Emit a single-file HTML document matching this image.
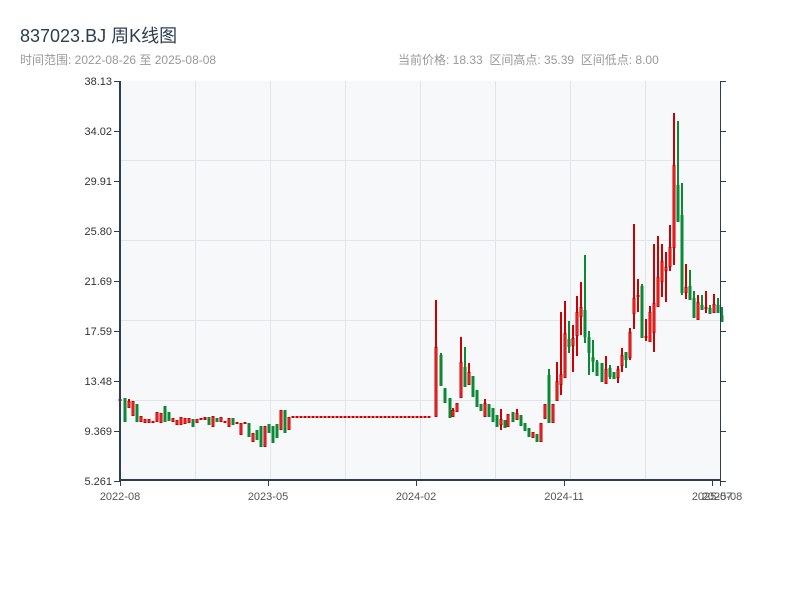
<!DOCTYPE html>
<html><head><meta charset="utf-8"><style>
body{margin:0;background:#fff;width:800px;height:600px;overflow:hidden;font-family:"Liberation Sans","Noto Sans CJK SC",sans-serif}
.t{position:absolute;left:20px;top:22px;font-size:18px;color:#2c3e50}
.s{position:absolute;left:20px;top:51px;font-size:12px;color:#999}
.r{position:absolute;left:398px;top:51px;font-size:12px;color:#999;word-spacing:0}
svg{position:absolute;left:0;top:0}
</style></head><body>
<div class="t">837023.BJ 周K线图</div>
<div class="s">时间范围: 2022-08-26 至 2025-08-08</div>
<div class="r">当前价格: 18.33&nbsp;&nbsp;区间高点: 35.39&nbsp;&nbsp;区间低点: 8.00</div>
<svg id="c" width="800" height="600" xmlns="http://www.w3.org/2000/svg" shape-rendering="crispEdges">
<rect x="120" y="81" width="600" height="399" fill="#f6f8fa"/>
<g stroke="#e1e4e8" stroke-width="1">
<line x1="195.5" y1="81" x2="195.5" y2="480"/><line x1="270.5" y1="81" x2="270.5" y2="480"/><line x1="345.5" y1="81" x2="345.5" y2="480"/><line x1="420.5" y1="81" x2="420.5" y2="480"/><line x1="495.5" y1="81" x2="495.5" y2="480"/><line x1="570.5" y1="81" x2="570.5" y2="480"/><line x1="645.5" y1="81" x2="645.5" y2="480"/>
<line x1="120" y1="160.5" x2="720" y2="160.5"/><line x1="120" y1="240.5" x2="720" y2="240.5"/><line x1="120" y1="320.5" x2="720" y2="320.5"/><line x1="120" y1="400.5" x2="720" y2="400.5"/>
</g>
<g id="k"></g>
<g stroke="#2c3e50">
<line x1="120" y1="81" x2="120" y2="481" stroke-width="2"/>
<line x1="119" y1="480" x2="721" y2="480" stroke-width="2"/>
<line x1="720.5" y1="81" x2="720.5" y2="481" stroke-width="1"/>
</g>
<g id="ax" stroke="#2c3e50" stroke-width="1"></g>
<g font-size="11" fill="#333" text-anchor="end" id="yl"></g>
<g font-size="11" fill="#555" text-anchor="middle">
<text x="120" y="500">2022-08</text><text x="268" y="500">2023-05</text><text x="416" y="500">2024-02</text><text x="564" y="500">2024-11</text><text x="712" y="500">2025-07</text><text x="722" y="500">2025-08</text>
</g>
</svg>
<script>
var D=[[119,399,401,399,401,'r'],[124,398,422,398,422,'g'],[128,399,408,401,408,'r'],[132,401,416,401,416,'r'],[136,404,422,404,422,'g'],[140,416,422,416,422,'r'],[144,419,423,419,423,'r'],[148,419,423,419,423,'r'],[152,421,423,421,423,'r'],[156,412,422,412,422,'r'],[160,413,423,413,423,'r'],[164,406,422,406,422,'g'],[168,412,421,412,421,'g'],[172,418,422,418,422,'r'],[176,420,425,420,425,'r'],[180,417,425,417,425,'r'],[184,418,424,418,424,'r'],[188,418,423,418,423,'r'],[192,419,427,419,427,'g'],[196,419,423,419,423,'r'],[200,418,420,418,420,'r'],[204,417,420,417,420,'r'],[208,417,425,417,425,'g'],[212,416,427,416,427,'r'],[216,418,422,418,422,'g'],[220,417,422,417,422,'r'],[224,421,423,421,423,'r'],[228,418,427,418,427,'r'],[232,418,425,418,425,'g'],[236,422,424,422,424,'r'],[240,423,435,423,435,'r'],[244,422,424,422,424,'r'],[248,423,437,423,437,'g'],[252,433,442,433,442,'r'],[256,430,440,430,440,'g'],[260,426,447,426,447,'g'],[264,426,447,426,447,'r'],[268,424,433,424,433,'g'],[272,426,443,426,443,'g'],[276,424,438,424,438,'g'],[280,410,430,410,430,'r'],[284,410,433,410,433,'g'],[288,417,430,417,430,'r']];
for(var x=292;x<432;x+=4)D.push([x,416,417,416,417,'r']);
D=D.concat([[435,300,417,347,417,'r'],[440,353,386,355,386,'g'],[444,388,403,388,403,'g'],[449,398,418,398,418,'g'],[452,408,417,410,417,'r'],[456,403,412,403,412,'r'],[460,337,398,362,398,'r'],[464,347,387,367,387,'g'],[468,363,385,372,385,'r'],[472,376,397,376,397,'g'],[476,390,407,390,407,'g'],[480,404,411,404,411,'g'],[484,399,417,403,417,'r'],[488,404,417,404,417,'g'],[492,408,422,408,422,'g'],[496,415,427,415,427,'g'],[500,409,430,419,425,'r'],[504,420,428,420,428,'g'],[507,414,427,414,427,'r'],[512,412,422,412,422,'g'],[516,409,420,413,420,'r'],[520,415,426,415,426,'g'],[524,423,431,423,431,'g'],[528,428,437,428,437,'g'],[532,432,438,432,438,'r'],[536,434,442,434,442,'g'],[540,423,442,423,442,'r'],[544,404,419,404,419,'r'],[548,369,423,375,423,'g'],[552,404,423,404,423,'r'],[556,362,401,381,401,'r'],[560,312,395,374,385,'r'],[564,301,378,333,378,'r'],[568,321,353,339,347,'g'],[572,325,372,338,346,'r'],[576,296,356,312,336,'r'],[580,282,335,307,317,'r'],[584,255,343,310,337,'g'],[588,331,375,337,353,'g'],[592,340,372,357,362,'g'],[596,360,376,362,376,'g'],[601,363,382,363,382,'g'],[605,356,384,369,384,'r'],[609,365,379,368,377,'g'],[613,372,379,372,379,'g'],[617,366,383,369,378,'r'],[621,348,372,355,366,'r'],[625,352,368,352,360,'g'],[629,328,360,332,358,'r'],[633,224,329,298,314,'r'],[637,279,312,295,297,'r'],[641,284,338,286,338,'g'],[645,319,341,336,338,'r'],[649,306,342,312,342,'r'],[653,244,352,303,333,'r'],[657,236,307,277,307,'r'],[661,244,297,261,282,'r'],[665,252,302,267,271,'r'],[669,225,271,247,267,'r'],[673,113,265,165,248,'r'],[677,121,222,185,222,'g'],[681,183,295,215,293,'g'],[685,264,299,287,293,'r'],[689,270,300,286,300,'g'],[693,291,318,298,318,'g'],[697,295,320,302,320,'r'],[701,295,310,305,310,'g'],[705,291,313,307,309,'r'],[709,305,314,308,314,'g'],[713,294,313,304,313,'r'],[717,298,313,305,313,'g'],[721,307,322,315,322,'g']]);
var s='';D.forEach(function(d){var x=d[0],c=d[5]=='r';var col=c?'#cc0000':'#0b8a36';
s+='<rect x="'+x+'" y="'+d[1]+'" width="2" height="'+Math.max(d[2]-d[1],1)+'" fill="'+col+'"/>';
var h=Math.max(d[4]-d[3],2);
s+='<rect x="'+(x-0.5)+'" y="'+d[3]+'" width="3" height="'+h+'" fill="'+col+'"/>';
if(c&&h>3)s+='<rect x="'+(x+0.5)+'" y="'+(d[3]+1)+'" width="1" height="'+(h-2)+'" fill="#f04040"/>';});
document.getElementById('k').innerHTML=s;
var L=['38.13','34.02','29.91','25.80','21.69','17.59','13.48','9.369','5.261'],a='',y='';
for(var i=0;i<9;i++){var yy=81+i*50;a+='<line x1="114" y1="'+(yy+.5)+'" x2="120" y2="'+(yy+.5)+'"/><line x1="720" y1="'+(yy+.5)+'" x2="726" y2="'+(yy+.5)+'"/>';y+='<text x="112" y="'+(yy+4)+'">'+L[i]+'</text>';}
[120,268,416,564,712,720].forEach(function(x){a+='<line x1="'+(x+.5)+'" y1="480" x2="'+(x+.5)+'" y2="486"/>';});
document.getElementById('ax').innerHTML=a;document.getElementById('yl').innerHTML=y;
</script>
</body></html>
